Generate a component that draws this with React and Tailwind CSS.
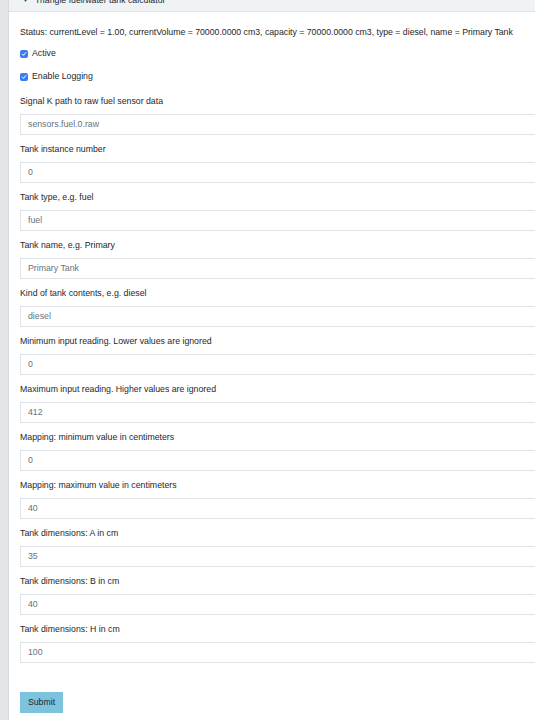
import React from "react";

const fields = [
  ["Signal K path to raw fuel sensor data", "sensors.fuel.0.raw"],
  ["Tank instance number", "0"],
  ["Tank type, e.g. fuel", "fuel"],
  ["Tank name, e.g. Primary", "Primary Tank"],
  ["Kind of tank contents, e.g. diesel", "diesel"],
  ["Minimum input reading. Lower values are ignored", "0"],
  ["Maximum input reading. Higher values are ignored", "412"],
  ["Mapping: minimum value in centimeters", "0"],
  ["Mapping: maximum value in centimeters", "40"],
  ["Tank dimensions: A in cm", "35"],
  ["Tank dimensions: B in cm", "40"],
  ["Tank dimensions: H in cm", "100"],
];

function Check() {
  return (
    <span className="w-[8px] h-[8px] rounded-[2px] bg-[#3a7cf0] flex items-center justify-center">
      <svg width="6" height="6" viewBox="0 0 6 6" fill="none">
        <path d="M1.2 3.1 L2.5 4.4 L4.8 1.5" stroke="white" strokeWidth="1" strokeLinecap="round" strokeLinejoin="round" />
      </svg>
    </span>
  );
}

export default function App() {
  return (
    <div
      className="w-[535px] h-[720px] overflow-hidden bg-[#e4e5e6] text-[#23282c]"
      style={{ fontFamily: '"Liberation Sans", Arial, sans-serif' }}
    >
      <div className="ml-[8px] w-[560px] bg-white border-l border-[#d6dadd] h-[760px] -mt-[11px]">
        <div className="h-[23px] bg-[#f0f3f5] border-b border-[#dfe3e6] flex items-center pl-[13px] text-[8.75px] leading-[12px]">
          <span className="text-[7px] mr-[6px]">▼</span>
          <span>Triangle fuel/water tank calculator</span>
        </div>
        <div className="pl-[11px] pt-[14px]">
          <div className="text-[8.75px] leading-[12px] tracking-[-0.02px]">
            Status: currentLevel = 1.00, currentVolume = 70000.0000 cm3, capacity = 70000.0000 cm3, type = diesel, name = Primary Tank
          </div>
          <div className="mt-[10px] flex items-center h-[12px] text-[8.75px]">
            <Check />
            <span className="ml-[4px]">Active</span>
          </div>
          <div className="mt-[11px] flex items-center h-[12px] text-[8.75px]">
            <Check />
            <span className="ml-[4px]">Enable Logging</span>
          </div>
          <div className="mt-[12px]">
            {fields.map(([label, value]) => (
              <div key={label} className="mb-[8px]">
                <div className="text-[8.75px] leading-[12px] h-[12px]">{label}</div>
                <div className="mt-[7px] h-[21px] border border-[#dfe3e7] flex items-center pl-[7px] text-[8.75px] text-[#66727e]">
                  {value}
                </div>
              </div>
            ))}
          </div>
          <div className="mt-[29px] w-[43px] h-[21px] bg-[#7ec3dd] flex items-center justify-center text-[8.75px] text-[#23282c]">
            Submit
          </div>
        </div>
      </div>
    </div>
  );
}
